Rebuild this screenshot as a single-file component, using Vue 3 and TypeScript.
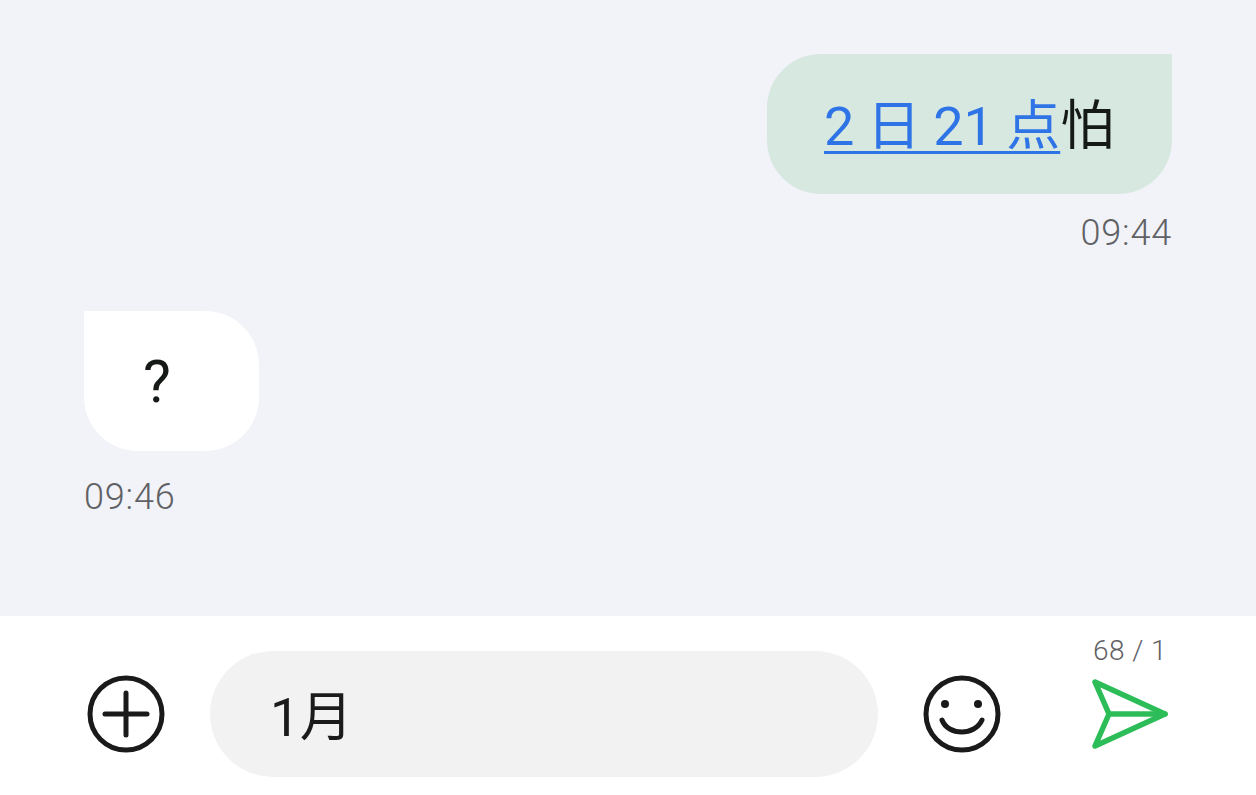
<script setup lang="ts">
import { ref } from "vue";

const draft = ref("1月");
const count = ref("68 / 1");
</script>

<template>
  <div class="chat">
    <div class="messages">
      <div class="msg mine">
        <div class="bubble bubble-mine"><a class="link">2 日 21 点</a>怕</div>
        <div class="time">09:44</div>
      </div>
      <div class="msg theirs">
        <div class="bubble bubble-theirs"><span class="mark">?</span></div>
        <div class="time">09:46</div>
      </div>
    </div>
    <div class="composer">
      <svg class="icon" width="80" height="80" viewBox="0 0 80 80" fill="none" stroke="#1a1a1a" stroke-width="5" stroke-linecap="round">
        <circle cx="40" cy="40" r="36" />
        <path d="M19 40H61M40 19V61" />
      </svg>
      <div class="input">{{ draft }}</div>
      <svg class="icon smile" width="80" height="80" viewBox="0 0 80 80" fill="none" stroke="#1a1a1a" stroke-width="5" stroke-linecap="round">
        <circle cx="40" cy="40" r="36" />
        <circle cx="23" cy="30" r="4" fill="#1a1a1a" stroke="none" />
        <circle cx="56" cy="30" r="4" fill="#1a1a1a" stroke="none" />
        <path d="M20 46C26 62 53 62 60 46" />
      </svg>
      <div class="send">
        <span class="count">{{ count }}</span>
        <svg width="80" height="74" viewBox="0 0 80 74" fill="none" stroke="#2cbd58" stroke-width="5.5" stroke-linecap="round" stroke-linejoin="round">
          <path d="M7 4L77 36L7 68L21 36Z" />
          <path d="M21 36H77" />
        </svg>
      </div>
    </div>
  </div>
</template>

<style>
html,
body {
  margin: 0;
  background: #f1f3f8;
}
</style>

<style scoped>
.chat {
  width: 1256px;
  height: 795px;
  display: flex;
  flex-direction: column;
  font-family: Roboto, "Noto Sans CJK SC", sans-serif;
  overflow: hidden;
}
.messages {
  height: 616px;
  box-sizing: border-box;
  padding: 54px 84px 0;
  background: #f1f3f8;
  display: flex;
  flex-direction: column;
  gap: 57px;
}
.msg {
  display: flex;
  flex-direction: column;
  gap: 18px;
}
.mine {
  align-items: flex-end;
}
.theirs {
  align-items: flex-start;
  gap: 25px;
}
.bubble {
  height: 140px;
  box-sizing: border-box;
  display: flex;
  align-items: center;
  padding: 0 0 6px 57px;
  font-size: 54px;
  word-spacing: -1px;
  color: #161a17;
  white-space: pre;
}
.bubble-mine {
  width: 405px;
  background: #d7e8e0;
  border-radius: 54px 0 54px 54px;
}
.bubble-theirs {
  width: 175px;
  padding: 0 0 0 59px;
  background: #fff;
  border-radius: 0 54px 54px 54px;
}
.mark {
  font-size: 59px;
}
.link {
  color: #2f74e6;
  text-decoration: underline;
  text-decoration-thickness: 3px;
  text-underline-offset: 6px;
}
.time {
  font-size: 36px;
  font-weight: 300;
  letter-spacing: 0.8px;
  line-height: 42px;
  color: #5f6165;
}
.composer {
  flex: 1;
  background: #fff;
  display: flex;
  align-items: center;
  padding: 16px 84px 0 86px;
  box-sizing: border-box;
}
.icon {
  flex: none;
}
.input {
  width: 668px;
  height: 126px;
  box-sizing: border-box;
  margin-left: 44px;
  padding: 0 0 2px 60px;
  display: flex;
  align-items: center;
  background: #f2f2f2;
  border-radius: 63px;
  font-size: 53px;
  color: #1b1b1b;
}
.smile {
  margin-left: 44px;
}
.send {
  margin-left: 86px;
  display: flex;
  flex-direction: column;
  align-items: center;
  gap: 12px;
  margin-top: -40px;
}
.count {
  padding-left: 4px;
  font-size: 28px;
  font-weight: 300;
  letter-spacing: 0.4px;
  line-height: 30px;
  color: #5f6165;
}
</style>
